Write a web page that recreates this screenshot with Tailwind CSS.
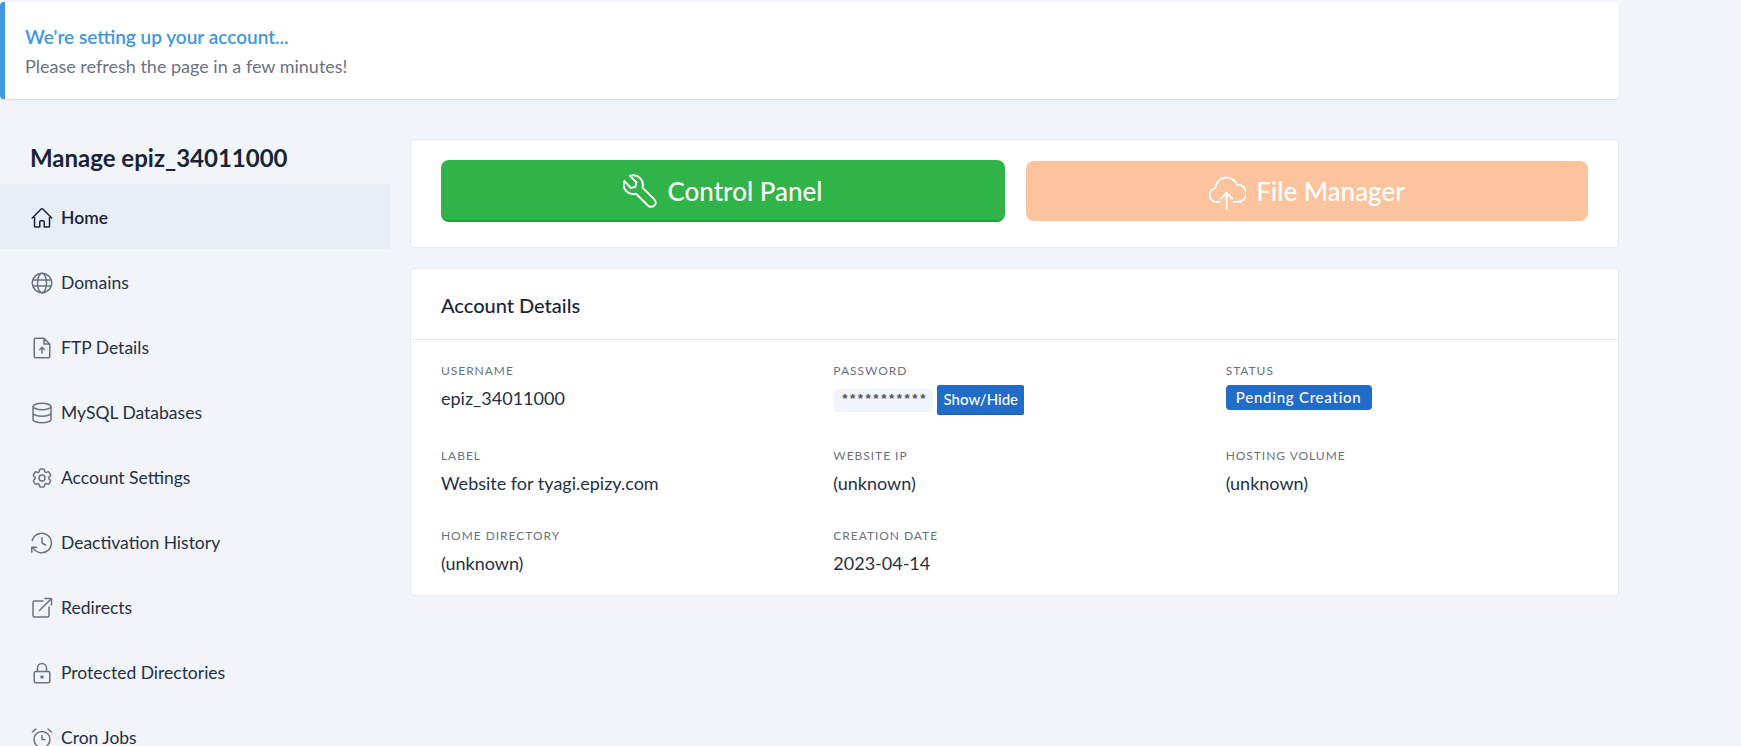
<!DOCTYPE html>
<html lang="en">
<head>
<meta charset="utf-8">
<title>Manage epiz_34011000</title>
<script src="https://cdn.jsdelivr.net/npm/@tailwindcss/browser@4"></script>
</head>
<body class="h-[746px] overflow-hidden bg-[#f1f4f9] font-['Lato','Noto_Sans',sans-serif] text-[#1a2438]">
<div class="w-[1619px]">
  <div class="mt-[2px] h-[97px] rounded-[4px] border-l-[5px] border-[#3f97e0] bg-white pl-[20px] pt-[23px] shadow-[0_1px_2px_rgba(0,0,0,0.12)]">
    <div class="text-[19px] leading-[24px] font-semibold text-[#3f97e0]">We're setting up your account...</div>
    <div class="mt-[5px] text-[18px] leading-[24px] text-[#6b7280]">Please refresh the page in a few minutes!</div>
  </div>
  <div class="mt-[40px] flex gap-[20px]">
    <aside class="w-[390px] shrink-0">
      <h2 class="pl-[30px] text-[24px] leading-[37px] font-bold h-[45px]">Manage epiz_34011000</h2>
      <nav class="text-[17.5px] text-[#263044]">
        <a class="flex h-[65px] items-center gap-[7px] bg-[#e7eef7] pl-[30px] pt-[3px] font-semibold text-[#1a2438]">
          <svg class="h-6 w-6 text-[#1a2438]" fill="none" stroke="currentColor" stroke-width="1.5" stroke-linecap="round" stroke-linejoin="round" viewBox="0 0 24 24"><path d="M2.25 12 11.2 3.05a1.13 1.13 0 0 1 1.6 0L21.75 12M4.5 9.75V19.9c0 .62.5 1.13 1.13 1.13H9.75V16c0-.62.5-1.13 1.13-1.13h2.24c.62 0 1.13.5 1.13 1.13v5.03h4.13c.62 0 1.13-.5 1.13-1.13V9.75"/></svg>
          Home
        </a>
        <a class="flex h-[65px] items-center gap-[7px] pl-[30px] pt-[3px]">
          <svg class="h-6 w-6 text-[#6b7280]" fill="none" stroke="currentColor" stroke-width="1.5" viewBox="0 0 24 24"><circle cx="12" cy="12" r="9.75"/><ellipse cx="12" cy="12" rx="4.5" ry="9.75"/><path d="M2.6 9h18.8M2.6 15h18.8"/></svg>
          Domains
        </a>
        <a class="flex h-[65px] items-center gap-[7px] pl-[30px] pt-[3px]">
          <svg class="h-6 w-6 text-[#6b7280]" fill="none" stroke="currentColor" stroke-width="1.5" stroke-linecap="round" stroke-linejoin="round" viewBox="0 0 24 24"><path d="M14 2.25H5.75c-.83 0-1.5.67-1.5 1.5v16.5c0 .83.67 1.5 1.5 1.5h12.5c.83 0 1.5-.67 1.5-1.5V8L14 2.25ZM14 2.25V8h5.75M12 17v-5.5M9.75 13.5 12 11.25l2.25 2.25"/></svg>
          FTP Details
        </a>
        <a class="flex h-[65px] items-center gap-[7px] pl-[30px] pt-[3px]">
          <svg class="h-6 w-6 text-[#6b7280]" fill="none" stroke="currentColor" stroke-width="1.5" viewBox="0 0 24 24"><ellipse cx="12" cy="5.5" rx="9" ry="3.25"/><path d="M3 5.5v13c0 1.8 4 3.25 9 3.25s9-1.45 9-3.25v-13M3 12c0 1.8 4 3.25 9 3.25s9-1.45 9-3.25"/></svg>
          MySQL Databases
        </a>
        <a class="flex h-[65px] items-center gap-[7px] pl-[30px] pt-[3px]">
          <svg class="h-6 w-6 text-[#6b7280]" fill="none" stroke="currentColor" stroke-width="1.5" stroke-linecap="round" stroke-linejoin="round" viewBox="0 0 24 24"><path d="M9.6 3.94c.09-.54.56-.94 1.11-.94h2.59c.55 0 1.02.4 1.11.94l.21 1.28c.06.37.31.68.64.87.08.04.15.09.22.13.33.2.73.26 1.09.13l1.22-.46c.51-.19 1.09.02 1.36.49l1.3 2.25c.27.48.16 1.08-.26 1.43l-1 .83c-.3.24-.44.62-.43 1v.25c-.01.38.13.76.43 1l1 .83c.42.35.53.95.26 1.43l-1.3 2.25c-.27.47-.85.68-1.36.49l-1.22-.46c-.36-.13-.76-.07-1.09.13l-.22.13c-.33.19-.58.5-.64.87l-.21 1.28c-.09.54-.56.94-1.11.94h-2.59c-.55 0-1.02-.4-1.11-.94l-.21-1.28c-.06-.37-.31-.68-.64-.87l-.22-.13c-.33-.2-.73-.26-1.09-.13l-1.22.46c-.51.19-1.09-.02-1.36-.49l-1.3-2.25c-.27-.48-.16-1.08.26-1.43l1-.83c.3-.24.44-.62.43-1v-.25c.01-.38-.13-.76-.43-1l-1-.83c-.42-.35-.53-.95-.26-1.43l1.3-2.25c.27-.47.85-.68 1.36-.49l1.22.46c.36.13.76.07 1.09-.13l.22-.13c.33-.19.58-.5.64-.87l.21-1.28Z"/><circle cx="12" cy="12" r="3"/></svg>
          Account Settings
        </a>
        <a class="flex h-[65px] items-center gap-[7px] pl-[30px] pt-[3px]">
          <svg class="h-6 w-6 text-[#6b7280]" fill="none" stroke="currentColor" stroke-width="1.5" stroke-linecap="round" stroke-linejoin="round" viewBox="0 0 24 24"><path d="M12 6.75V12l3.5 2M2.25 9.5A9.75 9.75 0 1 1 3 16.5M1.75 21v-4.75H6.5"/></svg>
          Deactivation History
        </a>
        <a class="flex h-[65px] items-center gap-[7px] pl-[30px] pt-[3px]">
          <svg class="h-6 w-6 text-[#6b7280]" fill="none" stroke="currentColor" stroke-width="1.5" stroke-linecap="round" stroke-linejoin="round" viewBox="0 0 24 24"><path d="M13 5H4.5C3.67 5 3 5.67 3 6.5v13c0 .83.67 1.5 1.5 1.5h13c.83 0 1.5-.67 1.5-1.5V11M9.5 14.5 21.5 2.5M15 2.5h6.5V9"/></svg>
          Redirects
        </a>
        <a class="flex h-[65px] items-center gap-[7px] pl-[30px] pt-[3px]">
          <svg class="h-6 w-6 text-[#6b7280]" fill="none" stroke="currentColor" stroke-width="1.5" stroke-linecap="round" stroke-linejoin="round" viewBox="0 0 24 24"><path d="M7.5 10.5V7a4.5 4.5 0 0 1 9 0v3.5M5.75 10.5h12.5c.83 0 1.5.67 1.5 1.5v8.25c0 .83-.67 1.5-1.5 1.5H5.75c-.83 0-1.5-.67-1.5-1.5V12c0-.83.67-1.5 1.5-1.5Z"/><circle cx="12" cy="16" r="1" fill="currentColor"/></svg>
          Protected Directories
        </a>
        <a class="flex h-[65px] items-center gap-[7px] pl-[30px] pt-[3px]">
          <svg class="h-6 w-6 text-[#6b7280]" fill="none" stroke="currentColor" stroke-width="1.5" stroke-linecap="round" stroke-linejoin="round" viewBox="0 0 24 24"><circle cx="12" cy="13.5" r="8"/><path d="M12 9.5v4h3M2.5 6l3.5-3M21.5 6 18 3"/></svg>
          Cron Jobs
        </a>
      </nav>
    </aside>
    <main class="min-w-0 flex-1">
      <section class="flex h-[109px] gap-[21px] rounded-[4px] border border-[#e5e8ee] bg-white px-[30px] pt-[20px]">
        <a class="flex h-[62px] w-[564px] items-center justify-center gap-[10px] rounded-[8px] border-b-2 border-[#2b9a43] bg-[#30b348] pt-[2px] text-[26px] font-medium text-white">
          <svg class="h-[34px] w-[34px]" fill="none" stroke="currentColor" stroke-width="1.1" stroke-linecap="round" stroke-linejoin="round" viewBox="4 3 19 19"><path d="M21.5 17.2 14.9 10.6c.5-1.8.1-3.9-1.3-5.3-1.5-1.5-3.7-2-5.7-1.2l3.6 3.6-.6 2.5-2.5.6L4.8 7c-.8 2-.3 4.2 1.2 5.7 1.4 1.4 3.5 1.8 5.3 1.3l6.6 6.6c.5.5 1.1.7 1.8.7.6 0 1.3-.2 1.8-.7 1-1 1-2.4 0-3.4Z"/></svg>
          Control Panel
        </a>
        <a class="mt-px flex h-[60px] flex-1 items-center justify-center gap-[10px] rounded-[8px] bg-[#fcc39d] text-[26px] font-medium text-white">
          <svg class="h-[37px] w-[37px]" fill="none" stroke="currentColor" stroke-width="1.1" stroke-linecap="round" stroke-linejoin="round" viewBox="2 1.5 21 21"><path d="M8 18H6.5a4 4 0 0 1-1-7.9A6.5 6.5 0 0 1 18 8.2a4.9 4.9 0 0 1 .5 9.8H16M12 22V13M8.8 16 12 12.8l3.2 3.2"/></svg>
          File Manager
        </a>
      </section>
      <section class="mt-[20px] h-[328px] rounded-[4px] border border-[#e5e8ee] bg-white">
        <h3 class="flex h-[71px] items-center border-b border-[#e5e8ee] px-[30px] pt-px text-[20px] font-medium">Account Details</h3>
        <div class="grid grid-cols-3 gap-x-[30px] px-[30px] pt-[22px] text-[#263044]">
          <div class="h-[85px]">
            <div class="text-[12px] leading-[18px] tracking-[0.08em] text-[#6b7280]">USERNAME</div>
            <div class="mt-[6px] text-[18px] leading-[24px]">epiz_34011000</div>
          </div>
          <div class="h-[85px]">
            <div class="text-[12px] leading-[18px] tracking-[0.08em] text-[#6b7280]">PASSWORD</div>
            <div class="mt-[5px] flex items-center gap-[4px] pl-px">
              <code class="flex h-[23px] w-[99px] items-center justify-center rounded-[4px] bg-[#f1f4f9] font-['Liberation_Mono',monospace] text-[13px] font-bold text-[#4b5563]">***********</code>
              <button class="h-[30px] w-[87px] rounded-[2px] border-b border-[#1d5fb0] bg-[#216cc6] text-[15px] font-medium text-white">Show/Hide</button>
            </div>
          </div>
          <div class="h-[85px]">
            <div class="text-[12px] leading-[18px] tracking-[0.08em] text-[#6b7280]">STATUS</div>
            <span class="mt-[5px] inline-flex h-[25px] w-[146px] items-center justify-center rounded-[4px] bg-[#216cc6] text-[15px] font-medium tracking-[0.05em] text-white">Pending Creation</span>
          </div>
          <div class="h-[80px]">
            <div class="text-[12px] leading-[18px] tracking-[0.08em] text-[#6b7280]">LABEL</div>
            <div class="mt-[6px] text-[18px] leading-[24px]">Website for tyagi.epizy.com</div>
          </div>
          <div class="h-[80px]">
            <div class="text-[12px] leading-[18px] tracking-[0.08em] text-[#6b7280]">WEBSITE IP</div>
            <div class="mt-[6px] text-[18px] leading-[24px]">(unknown)</div>
          </div>
          <div class="h-[80px]">
            <div class="text-[12px] leading-[18px] tracking-[0.08em] text-[#6b7280]">HOSTING VOLUME</div>
            <div class="mt-[6px] text-[18px] leading-[24px]">(unknown)</div>
          </div>
          <div>
            <div class="text-[12px] leading-[18px] tracking-[0.08em] text-[#6b7280]">HOME DIRECTORY</div>
            <div class="mt-[6px] text-[18px] leading-[24px]">(unknown)</div>
          </div>
          <div>
            <div class="text-[12px] leading-[18px] tracking-[0.08em] text-[#6b7280]">CREATION DATE</div>
            <div class="mt-[6px] text-[18px] leading-[24px]">2023-04-14</div>
          </div>
        </div>
      </section>
    </main>
  </div>
</div>
</body>
</html>
